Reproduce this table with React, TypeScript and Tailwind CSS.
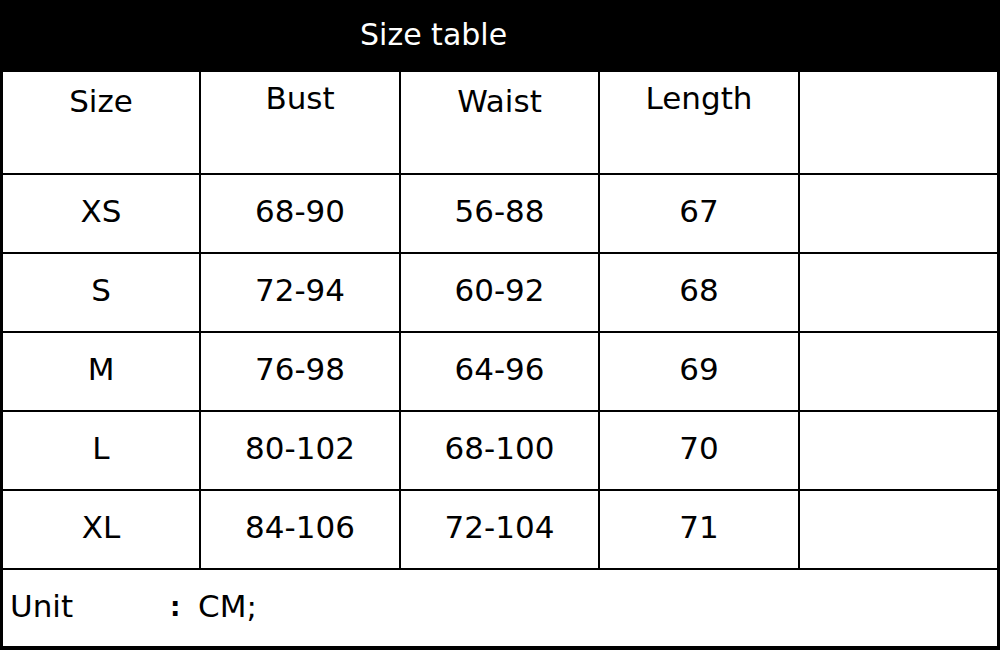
const headers = [
  { label: "Size", pad: "pt-[11px]" },
  { label: "Bust", pad: "pt-[8px]" },
  { label: "Waist", pad: "pt-[11px]" },
  { label: "Length", pad: "pt-[8px]" },
  { label: "", pad: "" },
]

const rows = [
  ["XS", "68-90", "56-88", "67"],
  ["S", "72-94", "60-92", "68"],
  ["M", "76-98", "64-96", "69"],
  ["L", "80-102", "68-100", "70"],
  ["XL", "84-106", "72-104", "71"],
]

const App = () => {
  return (
    <div className="w-[1000px] h-[650px] bg-white text-black font-['DejaVu_Sans',sans-serif] overflow-hidden">
      {/* title bar */}
      <div className="h-[72px] bg-black flex items-center pl-[360px]">
        <span className="text-white text-[30px] leading-none pb-[3px]">Size table</span>
      </div>

      {/* table */}
      <div className="border-l-[3px] border-r-[3px] border-b-[4px] border-black">
        <div className="grid grid-cols-[196px_198px_197px_198px_197px] grid-rows-[101px_repeat(5,77px)_76px] gap-[2px] bg-black">
          {headers.map((h, i) => (
            <div key={i} className={`bg-white flex justify-center text-[31px] leading-[37px] ${h.pad}`}>
              {h.label}
            </div>
          ))}

          {rows.map((row) =>
            [...row, ""].map((cell, j) => (
              <div
                key={row[0] + j}
                className="bg-white flex items-center justify-center text-[31px] leading-[37px] pb-[4px]"
              >
                {cell}
              </div>
            ))
          )}

          <div className="col-span-5 bg-white flex items-center pl-[7px] pb-[4px] text-[31px] leading-[37px]">
            <span className="w-[160px]">Unit</span>
            <span className="text-[26px] font-bold w-[28px] pt-[2px]">:</span>
            <span>CM;</span>
          </div>
        </div>
      </div>
    </div>
  )
}

export default App
